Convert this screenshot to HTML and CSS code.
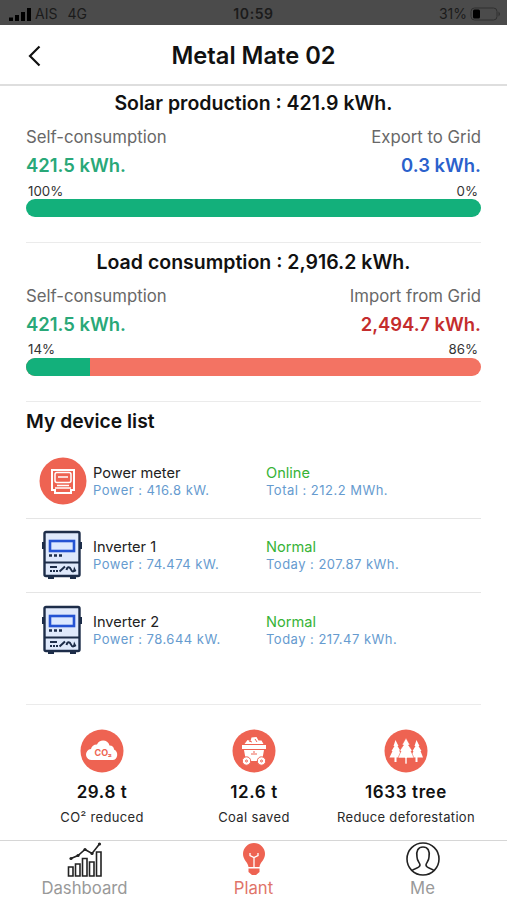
FILE: index.html
```html
<!DOCTYPE html>
<html lang="en">
<head>
<meta charset="utf-8">
<title>Metal Mate 02</title>
<link rel="stylesheet" href="styles.css">
</head>
<body>
<svg width="0" height="0" class="defs">
  <symbol id="inverter" viewBox="0 0 42 50">
    <path d="M7 45h6v4H7zM29 45h6v4h-6zM1 12h4v7H1zM37 12h4v7h-4z" fill="#1d2d49"/>
    <rect x="3.5" y="2" width="35" height="44" rx="1.5" fill="#dfe9fb" stroke="#1d2d49" stroke-width="2.4"/>
    <rect x="9" y="11" width="24" height="10" fill="#dce9ff" stroke="#2453d3" stroke-width="2.6"/>
    <path d="M8 25.5h3m2 0h3m2 0h3" stroke="#1d2d49" stroke-width="2.4"/>
    <path d="M4 32.5h34M9 37h7m-7 4h2m1 0h2m1 0h2M18.500 41.500l5.500-5M25.500 40c1-4 3.500-3 4.500-.5s3 2.500 3.500 0l1 2" fill="none" stroke="#1d2d49" stroke-width="2"/>
  </symbol>
</svg>
<header class="status">
  <div class="carrier">
    <svg width="23" height="13" viewBox="0 0 23 13"><path d="M0 9.500h4V13H0zM6 7h4v6H6zM12 4h4v9h-4zM18 0h4v13h-4z"/></svg>
    <span>AIS</span><span class="network">4G</span>
  </div>
  <div class="clock">10:59</div>
  <div class="power"><span>31%</span>
    <svg width="31" height="14" viewBox="0 0 31 14"><rect x="1" y="1" width="26" height="12" rx="3.500" fill="none" stroke="#303030"/><rect x="3" y="2.500" width="7" height="9" rx="1.500"/><path d="M28.500 4.500q3 2.500 0 5" fill="#303030"/></svg>
  </div>
</header>
<div class="title">
  <svg class="back" width="14" height="22" viewBox="0 0 14 22"><path d="M11.500 1.500 2 11l9.500 9.500" fill="none" stroke="#111" stroke-width="2.200"/></svg>
  <h1>Metal Mate 02</h1>
</div>
<main>
  <section class="energy">
    <h2>Solar production : 421.9 kWh.</h2>
    <div class="pair label"><span>Self-consumption</span><span>Export to Grid</span></div>
    <div class="pair value"><span class="green">421.5 kWh.</span><span class="blue">0.3 kWh.</span></div>
    <div class="pair percent"><span>100%</span><span>0%</span></div>
    <div class="bar"><div class="fill" style="width:100%"></div></div>
  </section>
  <section class="energy load">
    <h2>Load consumption : 2,916.2 kWh.</h2>
    <div class="pair label"><span>Self-consumption</span><span>Import from Grid</span></div>
    <div class="pair value"><span class="green">421.5 kWh.</span><span class="red">2,494.7 kWh.</span></div>
    <div class="pair percent"><span>14%</span><span>86%</span></div>
    <div class="bar"><div class="fill" style="width:14%"></div></div>
  </section>
  <section class="devices">
    <h2>My device list</h2>
    <div class="device">
      <svg class="device-icon" width="48" height="48" viewBox="0 0 48 48"><circle cx="24" cy="24" r="23.500" fill="#ee6352"/><path d="M13 13h22v20h-3v3H16v-3h-3z" fill="none" stroke="#fff" stroke-width="2"/><rect x="16" y="15.500" width="16" height="10" rx="2" fill="none" stroke="#fff" stroke-width="1.500"/><path d="M19 20h10M18 28.500h12M16 31h16" stroke="#fff" stroke-width="1.500"/></svg>
      <div class="info"><div>Power meter</div><p>Power : 416.8 kW.</p></div>
      <div class="reading"><div>Online</div><p>Total : 212.2 MWh.</p></div>
    </div>
    <div class="device">
      <svg class="device-icon" width="46" height="50"><use href="#inverter"/></svg>
      <div class="info"><div>Inverter 1</div><p>Power : 74.474 kW.</p></div>
      <div class="reading"><div>Normal</div><p>Today : 207.87 kWh.</p></div>
    </div>
    <div class="device">
      <svg class="device-icon" width="46" height="50"><use href="#inverter"/></svg>
      <div class="info"><div>Inverter 2</div><p>Power : 78.644 kW.</p></div>
      <div class="reading"><div>Normal</div><p>Today : 217.47 kWh.</p></div>
    </div>
  </section>
  <section class="impact">
    <div class="benefit">
      <svg width="44" height="44" viewBox="0 0 44 44"><circle cx="22" cy="22" r="21.500" fill="#ee6352"/><path d="M12 31a5.500 5.500 0 0 1-1-11 6 6 0 0 1 6-4.500c2-5.500 11-5.500 12.500 1 3 0 4.500 2 4.500 4 5 2 4 10.500-1.500 10.500z" fill="#fff"/><text x="14.500" y="26.500" class="co">CO₂</text></svg>
      <strong>29.8 t</strong><span>CO² reduced</span>
    </div>
    <div class="benefit">
      <svg width="44" height="44" viewBox="0 0 44 44"><circle cx="22" cy="22" r="21.500" fill="#ee6352"/><path d="M10 16h24v4H10zM12 21h20l-2 11H14zM12.500 15l3-4 3 1 1-3.500 5-.5 2 3.500 3 0 2 3.500z" fill="#fff"/><path d="M17 12l3 1m3-3 2 3M19 25h6m-4-2h2" stroke="#ee6352"/><g fill="#fff" stroke="#ee6352"><circle cx="14.500" cy="32" r="4.200"/><circle cx="29.500" cy="32" r="4.200"/><circle cx="14.500" cy="32" r="1"/><circle cx="29.500" cy="32" r="1"/></g></svg>
      <strong>12.6 t</strong><span>Coal saved</span>
    </div>
    <div class="benefit">
      <svg width="44" height="44" viewBox="0 0 44 44"><circle cx="22" cy="22" r="21.500" fill="#ee6352"/><g fill="#fff"><path d="M11.500 11l3 6h-1l3 5h-1l3 6.500h-6V33h-2v-4.500h-5l3-6.500h-1l3-5h-1z"/><path d="M32.500 11l3 6h-1l3 5h-1l2.500 6.500h-5.500V33h-2v-4.500h-5l3-6.500h-1l3-5h-1z"/><path d="M22 9l4 7h-1.500l4 6H27l3 7h-7v6h-2v-6h-7l3-7h-1.500l4-6H18z" stroke="#ee6352" stroke-width=".6"/></g></svg>
      <strong>1633 tree</strong><span>Reduce deforestation</span>
    </div>
  </section>
</main>
<nav>
  <div class="tab"><svg width="36" height="36" viewBox="0 0 36 36" fill="none" stroke="#222" stroke-width="1.600"><path d="M1.500 26h4.500v9H1.500zM8.500 23H13v12H8.500zM15.500 17.500H20V35h-4.500zM22.500 21H27v14h-4.500zM29.500 11H34v24h-4.500zM4 17.500l7-3 7-6 7 4L32.500 3"/><g fill="#222" stroke="none"><circle cx="4" cy="17.500" r="1.600"/><circle cx="11" cy="14.500" r="1.600"/><circle cx="18" cy="8.500" r="1.600"/><circle cx="25" cy="12.500" r="1.600"/><circle cx="32.500" cy="3" r="1.600"/></g></svg><span>Dashboard</span></div>
  <div class="tab active"><svg width="36" height="36" viewBox="0 0 36 36"><path d="M18 2A11 11 0 0 0 7 13c0 6 5 8 5.500 13h11C24 21 29 19 29 13A11 11 0 0 0 18 2zM12.500 27.500h11V31l-3.500 3h-4l-3.500-3z" fill="#ee6352"/><path d="M14 12v2.500l4 2 4-2V12M18 16v10" fill="none" stroke="#fff" stroke-width="1.300"/></svg><span>Plant</span></div>
  <div class="tab"><svg width="36" height="36" viewBox="0 0 36 36" fill="none" stroke="#222" stroke-width="1.600"><circle cx="18" cy="18" r="16"/><path d="M7 29.500c2-2.500 8-2 8-5.500 0-2-3-4-3-8-1-6 1-10 6-10s7 4 6 10c0 4-3 6-3 8 0 3.500 6 3 8 5.500"/></svg><span>Me</span></div>
</nav>
</body>
</html>
```
FILE: styles.css
```css
* { box-sizing: border-box; }
body { margin: 0; width: 507px; height: 900px; display: flex; flex-direction: column; overflow: hidden; background: #fff; color: #111; font-family: Inter, "Liberation Sans", sans-serif; }
h1, h2, p { margin: 0; }
.defs { position: absolute; }
.status { height: 25px; flex: none; display: grid; grid-template-columns: 1fr auto 1fr; align-items: center; padding: 3px 6px 0 9px; background: #4b4b4b; color: #1b1b1b; font-size: 14px; line-height: 20px; }
.carrier, .power { display: flex; align-items: center; }
.carrier svg { margin-right: 3px; }
.network { margin-left: 10px; }
.clock { margin-right: 3px; font-weight: 600; letter-spacing: .6px; }
.power { justify-content: flex-end; gap: 3px; }
.title { height: 61px; flex: none; display: grid; grid-template-columns: 40px 1fr 40px; align-items: center; padding-top: 2px; border-bottom: 2px solid #dedede; }
.back { margin-left: 28px; }
h1 { text-align: center; font-size: 23.700px; line-height: 30px; font-weight: 600; }
main { flex: 1; padding: 0 26px; }
h2 { font-size: 19.500px; line-height: 24px; font-weight: 600; text-align: center; }
.energy { height: 157px; padding-top: 5px; border-bottom: 1px solid #ebebeb; }
.load { height: 159px; padding-top: 7px; }
.pair { display: flex; justify-content: space-between; }
.label { height: 24px; margin-top: 10px; font-size: 16.750px; line-height: 24px; color: #686868; }
.value { height: 24px; margin-top: 4px; font-size: 18.450px; line-height: 24px; font-weight: 600; }
.green { color: #29a878; }
.blue { color: #2b61cc; }
.red { color: #c42d2d; }
.percent { height: 16px; margin-top: 6px; padding: 0 3px 0 2px; font-size: 13.300px; line-height: 16px; color: #333; }
.bar { height: 18px; border-radius: 9px; background: #f37363; overflow: hidden; }
.fill { height: 100%; background: #13b07b; }
.load .percent { margin-top: 5px; }
.load .bar { margin-top: 1px; }
.devices { padding-top: 7px; height: 303px; border-bottom: 1px solid #ebebeb; }
.devices h2 { text-align: left; font-size: 19.300px; margin-bottom: 11px; }
.device { height: 74.500px; display: grid; grid-template-columns: 54px 173px 1fr; align-items: center; padding-left: 13px; border-bottom: 1px solid #e5e5e5; }
.device:last-child { border: 0; }
.info, .reading { padding-top: 2px; font-size: 14.600px; line-height: 17px; color: #222; }
.reading { color: #36b336; }
.info p, .reading p { font-size: 13px; line-height: 17px; letter-spacing: .48px; color: #669bcf; }
.impact { display: grid; grid-template-columns: repeat(3, 152px); padding-top: 24px; }
.benefit { display: flex; flex-direction: column; align-items: center; white-space: nowrap; }
.benefit strong { font-size: 17px; line-height: 22px; font-weight: 600; letter-spacing: .6px; margin-top: 8px; }
.benefit span { font-size: 13px; line-height: 18px; letter-spacing: .33px; margin-top: 5px; color: #282828; }
.co { fill: #ee6352; font-size: 9px; font-weight: 700; }
nav { height: 60px; flex: none; display: grid; grid-template-columns: repeat(3, 1fr); border-top: 1px solid #d6d6d6; }
.tab { display: flex; flex-direction: column; align-items: center; font-size: 16.700px; line-height: 22px; color: #999; }
.active { color: #df7469; }
```
